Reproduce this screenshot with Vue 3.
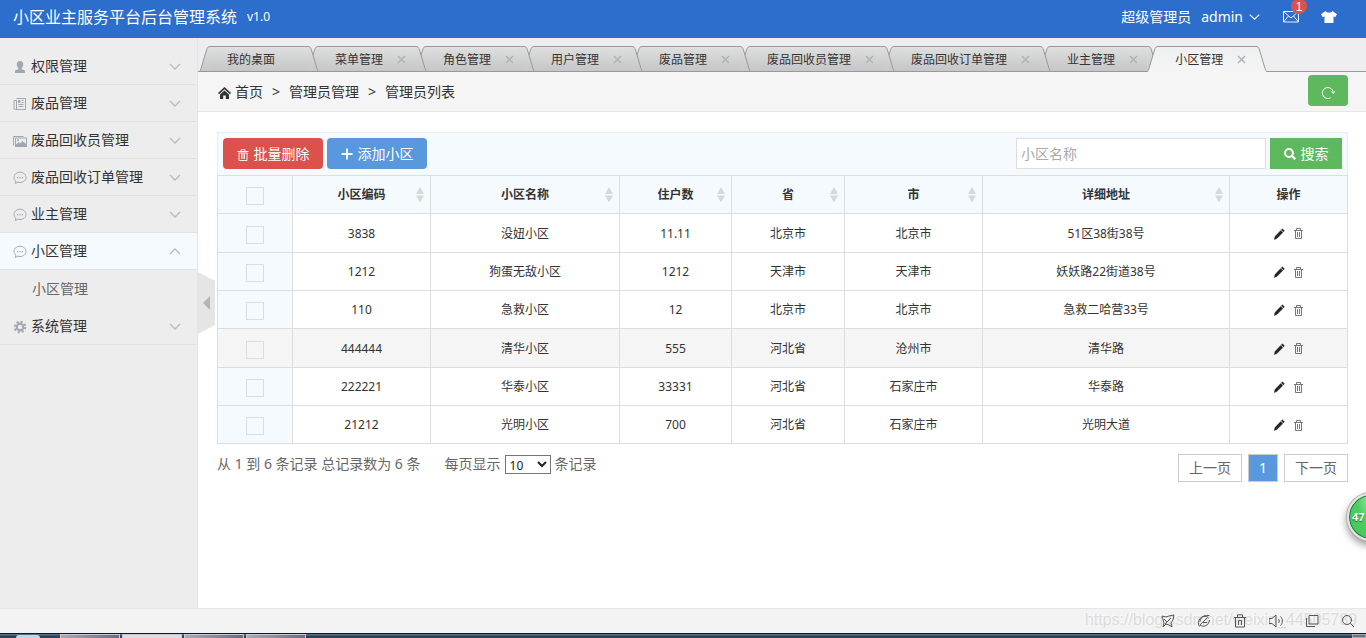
<script setup>
import { ref } from 'vue'

const menus = [
  { name: '权限管理', icon: 'user' },
  { name: '废品管理', icon: 'news' },
  { name: '废品回收员管理', icon: 'image' },
  { name: '废品回收订单管理', icon: 'chat' },
  { name: '业主管理', icon: 'chat' },
  { name: '小区管理', icon: 'chat', open: true, children: ['小区管理'] },
  { name: '系统管理', icon: 'gear' },
]
const tabs = ['我的桌面', '菜单管理', '角色管理', '用户管理', '废品管理', '废品回收员管理', '废品回收订单管理', '业主管理', '小区管理']
const activeTab = tabs.length - 1
const columns = ['小区编码', '小区名称', '住户数', '省', '市', '详细地址']
const rows = [
  ['3838', '没妞小区', '11.11', '北京市', '北京市', '51区38街38号'],
  ['1212', '狗蛋无敌小区', '1212', '天津市', '天津市', '妖妖路22街道38号'],
  ['110', '急救小区', '12', '北京市', '北京市', '急救二哈营33号'],
  ['444444', '清华小区', '555', '河北省', '沧州市', '清华路'],
  ['222221', '华泰小区', '33331', '河北省', '石家庄市', '华泰路'],
  ['21212', '光明小区', '700', '河北省', '石家庄市', '光明大道'],
]
const highlighted = 3
const keyword = ref('')
const pageSize = ref('10')
</script>

<template>
  <div class="page">
    <header class="topbar">
      <h1 class="brand">小区业主服务平台后台管理系统</h1>
      <span class="version">v1.0</span>
      <nav class="account">
        <span>超级管理员</span>
        <a class="who" href="#">admin
          <svg width="11" height="6" viewBox="0 0 11 6"><path d="M.7.6 5.5 5.1 10.3.6" fill="none" stroke="#fff" stroke-width="1.200" /></svg>
        </a>
        <a class="mail" href="#" aria-label="消息">
          <svg width="16" height="12" viewBox="0 0 16 12"><path d="M.5.5h15v10.500H.5zM.5.5 8 7 15.500.5M.5 11l5-6M15.500 11l-5-6" fill="none" stroke="#fff" stroke-width=".9" /></svg>
          <span class="badge">1</span>
        </a>
        <a class="skin" href="#" aria-label="换肤">
          <svg width="16" height="12" viewBox="0 0 16 12"><path d="M4.500 0C6 2 10 2 11.500 0L16 3.200 14.200 6.200 12.500 5.200V12h-9V5.200L1.800 6.200 0 3.200z" fill="#fff" /></svg>
        </a>
      </nav>
    </header>

    <div class="body">
      <aside class="sidebar">
        <nav>
          <template v-for="m in menus" :key="m.name">
            <button class="menu" :class="{ open: m.open }" type="button">
              <svg class="menu-icon" width="14" height="14" viewBox="0 0 14 14">
                <path v-if="m.icon === 'user'" d="M7 1c2.200 0 3.400 1.500 3.200 3.800-.1 1.400-.7 2.600-1.500 3.300v1.200L12 10.400V13H2v-2.600l3.300-1.100V8.100C4.500 7.400 3.900 6.200 3.800 4.800 3.600 2.500 4.800 1 7 1z" fill="#a1a7b2" />
                <g v-else-if="m.icon === 'news'" fill="none" stroke="#a1a7b2">
                  <path d="M3.500 1.500h9v11H2.500a1.500 1.500 0 0 1-1.500-1.500V3.500h2.500V12M5.500 7.500h5M5.500 9.500h5M8.500 3.500h2M8.500 5.500h2" />
                  <path d="M5.500 3.500h1.500v2H5.500z" fill="#a1a7b2" />
                </g>
                <g v-else-if="m.icon === 'image'">
                  <path d="M.5 11.500V2.500h10" fill="none" stroke="#a1a7b2" />
                  <path fill-rule="evenodd" d="M2 3.500h12v9.500H2zM3 4.500v6l2.500-2.500 1.500 1.500 2.500-2.500L13 10V4.500zM5 5.300a1 1 0 1 1 0 2 1 1 0 0 1 0-2z" fill="#a1a7b2" />
                </g>
                <g v-else-if="m.icon === 'chat'">
                  <path d="M3 10.300C1.500 9.300 1 7.900 1 6.500c0-3 2.700-5.300 6-5.300s6 2.300 6 5.300-2.700 5-6 5c-.8 0-1.500-.1-2.200-.3L2.300 12.500z" fill="none" stroke="#a1a7b2" />
                  <path d="M4 6h1.300v1.300H4zM6.400 6h1.300v1.300H6.400zM8.800 6h1.300v1.300H8.800z" fill="#a1a7b2" />
                </g>
                <g v-else fill="none" stroke="#a1a7b2">
                  <circle cx="7" cy="7" r="3.300" stroke-width="2.200" />
                  <circle cx="7" cy="7" r="5.300" stroke-width="2" stroke-dasharray="2.100 2.060" />
                </g>
              </svg>
              <span class="menu-name">{{ m.name }}</span>
              <svg class="arrow" width="12" height="7" viewBox="0 0 12 7"><path :d="m.open ? 'M1 6 6 1 11 6' : 'M1 1 6 6 11 1'" fill="none" stroke="#bbb" stroke-width="1.300" /></svg>
            </button>
            <a v-for="c in m.children" :key="c" class="submenu" href="#">{{ c }}</a>
          </template>
        </nav>
      </aside>

      <main class="main">
        <button class="handle" type="button" aria-label="收起菜单">
          <svg width="18" height="62" viewBox="0 0 18 62"><path d="M0 0 17 9V53L0 62z" fill="#e5e5e5" /><path d="M5 31 12 24V38z" fill="#b5b5b5" /></svg>
        </button>

        <nav class="tabs">
          <a v-for="(t, i) in tabs" :key="t" href="#" class="tab" :class="{ active: i === activeTab }" :style="{ zIndex: i === activeTab ? 20 : 10 - i }">
            <svg class="edge" width="12" height="26" viewBox="0 0 12 26">
              <defs>
                <linearGradient id="tab-idle" x1="0" y1="0" x2="0" y2="1"><stop offset="0" stop-color="#dedfdf" /><stop offset="1" stop-color="#c6c6c8" /></linearGradient>
                <linearGradient id="tab-on" x1="0" y1="0" x2="0" y2="1"><stop offset="0" stop-color="#eeeff0" /><stop offset="1" stop-color="#f5f5f5" /></linearGradient>
              </defs>
              <path d="M0 26C1 25 1.500 24 2 22.500L7.500 4C8.300 1.500 9 .5 11 .5h1V26z" :fill="i === activeTab ? 'url(#tab-on)' : 'url(#tab-idle)'" />
              <path d="M0 26C1 25 1.500 24 2 22.500L7.500 4C8.300 1.500 9 .5 11 .5h1" fill="none" stroke="#999" />
            </svg>
            <span class="tab-mid">{{ t }}<span v-if="i" class="close"><svg width="9" height="9" viewBox="0 0 9 9"><path d="M1 1l7 7M8 1 1 8" stroke="#aeb3b8" stroke-width="1.500" /></svg></span></span>
            <svg class="edge" width="12" height="26" viewBox="0 0 12 26">
              <path d="M12 26C11 25 10.500 24 10 22.500L4.500 4C3.700 1.500 3 .5 1 .5H0V26z" :fill="i === activeTab ? 'url(#tab-on)' : 'url(#tab-idle)'" />
              <path d="M12 26C11 25 10.500 24 10 22.500L4.500 4C3.700 1.500 3 .5 1 .5H0" fill="none" stroke="#999" />
            </svg>
          </a>
        </nav>

        <div class="crumbs">
          <svg class="home" width="13" height="12" viewBox="0 0 13 12"><path d="M6.500 0 13 6 12 7.200 6.500 2.300 1 7.200 0 6z" fill="#333" /><path d="M2 7.500 6.500 3.600 11 7.500V12H7.800V8.500H5.200V12H2z" fill="#333" /></svg>
          <a href="#">首页</a><span class="gt">&gt;</span><a href="#">管理员管理</a><span class="gt">&gt;</span><span>管理员列表</span>
          <button class="refresh" type="button" aria-label="刷新">
            <svg width="14" height="14" viewBox="0 0 14 14"><path d="M9.500 11.800A5.500 5.500 0 1 1 12.300 6.500M10.300 5.500 12.300 7.500 13.800 5.300" fill="none" stroke="#fff" /></svg>
          </button>
        </div>

        <section class="content">
          <div class="toolbar">
            <button class="btn danger" type="button">
              <svg class="bin" width="12" height="12" viewBox="0 0 12 12"><path d="M.5 2.500h11M4 2.500V.7h4v1.800M2 4v7.500h8V4M4.500 4.500V10M6 4.500V10M7.500 4.500V10M1.500 4h9" fill="none" stroke="#fff" stroke-width=".9" /></svg>
              批量删除
            </button>
            <button class="btn primary" type="button">
              <svg width="12" height="12" viewBox="0 0 12 12"><path d="M6 .5v11M.5 6h11" stroke="#fff" stroke-width="1.800" /></svg>
              添加小区
            </button>
            <input v-model="keyword" class="keyword" type="text" placeholder="小区名称" aria-label="小区名称">
            <button class="btn success" type="button">
              <svg width="12" height="12" viewBox="0 0 12 12"><circle cx="5" cy="5" r="3.900" fill="none" stroke="#fff" stroke-width="2" /><path d="M8 8l3.200 3.200" stroke="#fff" stroke-width="2.300" /></svg>
              搜索
            </button>
          </div>

          <table class="grid">
            <colgroup><col class="c-check"><col class="c-code"><col class="c-name"><col class="c-count"><col class="c-prov"><col class="c-city"><col class="c-addr"><col class="c-op"></colgroup>
            <thead>
              <tr>
                <th><input type="checkbox" aria-label="全选"></th>
                <th v-for="c in columns" :key="c">
                  <span class="th-in">{{ c }}<svg class="sort" width="8" height="16" viewBox="0 0 8 16"><path d="M4 0 8 7H0zM4 15.500 0 8.500h8z" fill="#d8d8d8" /></svg></span>
                </th>
                <th>操作</th>
              </tr>
            </thead>
            <tbody>
              <tr v-for="(r, i) in rows" :key="r[0]" :class="{ hot: i === highlighted }">
                <td><input type="checkbox" :aria-label="'选择 ' + r[1]"></td>
                <td v-for="(v, k) in r" :key="k" class="value">{{ v }}</td>
                <td>
                  <span class="ops">
                    <a href="#" aria-label="编辑"><svg width="11" height="12" viewBox="0 0 11 12"><path d="M8.400.8 10.400 2.800 9.400 3.900 7.300 1.800zM6.700 2.500 8.800 4.600 2.900 10.500.3 11.600 1 8.500z" fill="#222" stroke="#222" stroke-width=".4" /></svg></a>
                    <a href="#" aria-label="删除"><svg width="9" height="11" viewBox="0 0 9 11"><path d="M0 2.500h9M2.500 2V.5h4V2M1.500 3v7.500h6V3M3.500 4v5M5.500 4v5" fill="none" stroke="#666" stroke-width=".9" /></svg></a>
                  </span>
                </td>
              </tr>
            </tbody>
          </table>

          <div class="foot">
            <span>从 1 到 6 条记录 总记录数为 6 条</span>
            <label class="size">每页显示
              <select v-model="pageSize"><option>10</option><option>25</option><option>50</option></select>
              条记录</label>
            <nav class="pager">
              <a href="#">上一页</a><a href="#" class="current">1</a><a href="#">下一页</a>
            </nav>
          </div>
        </section>
      </main>
    </div>

    <footer class="status">
      <span class="mark">https://blog.csdn.net/weixin_44505789</span>
      <div class="tools">
        <svg viewBox="0 0 14 14"><path d="M1 2l4 1 3-1 5-1-1 5-2 3 1 4-3-2-3-1-3 3 1-4zM4 10l6-6M3 5l3 3" /></svg>
        <svg viewBox="0 0 14 14"><path d="M2.500 12.500C-1 7 4 .5 12.500 1.500M3 11c3 2.500 9 1 9.500-5M3 7.500C4 2 9 1 11.500 4M6 8.500h4M3 11l7-7" /></svg>
        <svg viewBox="0 0 14 14"><path d="M1 3.500h12M4.500 3V.8h5V3M2.500 4v9h9V4M5.500 11V6.500h3V11" /></svg>
        <svg viewBox="0 0 14 14"><path d="M0 4.500h3L7 1v12L3 9.500H0zM9.500 5c1 1 1 3 0 4M11.500 2.500c2.500 2.500 2.500 6.500 0 9" /></svg>
        <svg viewBox="0 0 14 14"><path d="M4 1.500h9V10H4zM1.500 4v8.500H10" /></svg>
        <svg viewBox="0 0 14 14"><circle cx="6" cy="6" r="4.500" /><path d="M9.300 9.300 13 13" /></svg>
      </div>
    </footer>
    <div class="taskbar">
      <i class="orb"></i><i class="win"></i><i class="win bright"></i><i class="win"></i><i class="win"></i><i class="peek"></i>
    </div>

    <div class="ball">47</div>
  </div>
</template>

<style>
html, body { margin: 0; background: #fff; }
</style>

<style scoped>
.page {
  position: relative;
  display: flex;
  flex-direction: column;
  min-height: 100vh;
  overflow: hidden;
  font: 14px/20px "Noto Sans", "Noto Sans CJK SC", sans-serif;
  color: #333;
}
.page * { box-sizing: border-box; }
a { color: inherit; text-decoration: none; }
button, input, select { font: inherit; color: inherit; margin: 0; }
svg { display: block; flex: none; }

.topbar {
  display: flex;
  align-items: center;
  height: 38px;
  padding: 0 29px 4px 13px;
  background: #2d6dcc;
  color: #fff;
}
.brand { margin: 0; font-size: 16px; font-weight: 400; }
.version { margin-left: 10px; font-size: 12px; }
.account { display: flex; align-items: center; margin-left: auto; gap: 10px; }
.who { display: flex; align-items: center; gap: 6px; }
.mail { position: relative; margin-left: 13px; }
.badge {
  position: absolute;
  left: 8px;
  top: -11px;
  width: 16px;
  height: 14px;
  border-radius: 5px 5px 8px 8px;
  background: #dd514c;
  font: 12px/14px "Liberation Sans", Arial, sans-serif;
  text-align: center;
}
.skin { margin-left: 12px; }

.body { flex: 1; display: flex; }
.sidebar {
  flex: none;
  width: 198px;
  padding-top: 10px;
  background: #ededed;
  border-right: 1px solid #e5e5e5;
}
.menu {
  display: flex;
  align-items: center;
  width: 100%;
  height: 37px;
  padding: 0 16px 0 13px;
  border: 0;
  border-bottom: 1px solid #e2e2e2;
  background: none;
  text-align: left;
}
.menu.open { background: #f5fafe; }
.menu-icon { margin-top: 2px; }
.menu-name { flex: 1; margin-left: 4px; }
.submenu { display: block; padding: 9px 0 9px 32px; color: #666; }

.main { position: relative; flex: 1; min-width: 0; }
.handle {
  position: absolute;
  left: 0;
  top: 234px;
  padding: 0;
  border: 0;
  background: none;
}
.tabs {
  display: flex;
  height: 34px;
  padding: 8px 0 0 1px;
  background: #eeeef0;
  box-shadow: inset 0 -1px #999;
}
.tab {
  position: relative;
  display: flex;
  height: 25px;
  margin-right: -12px;
  font-size: 12px;
  line-height: 26px;
}
.tab.active { height: 26px; }
.edge { height: 26px; }
.tab:not(.active) .edge { clip-path: inset(0 0 1px 0); }
.tab-mid {
  display: flex;
  padding: 0 32px 0 16px;
  border-top: 1px solid #999;
  background: linear-gradient(#dedfdf, #c6c6c8);
}
.tab.active .tab-mid { background: linear-gradient(#eeeff0, #f5f5f5); }
.close { width: 0; padding: 8px 0 0 14px; margin-right: -14px; }

.crumbs {
  display: flex;
  align-items: center;
  height: 40px;
  padding: 0 18px 0 20px;
  background: #f5f5f5;
  border-bottom: 1px solid #e5e5e5;
}
.home { margin: 2px 4px 0 0; }
.gt { margin: 0 9px; }
.refresh {
  display: grid;
  place-items: center;
  width: 40px;
  height: 31px;
  margin: 0 0 2px auto;
  padding: 4px 0 0;
  border: 0;
  border-radius: 4px;
  background: #5eb95e;
}

.content { padding: 20px 18px 20px 19px; }
.toolbar {
  display: flex;
  gap: 4px;
  height: 43px;
  padding: 5px;
  border: 1px solid #ebeef0;
  border-bottom: 0;
  background: #f5fafe;
}
.btn {
  display: flex;
  align-items: center;
  justify-content: center;
  gap: 5px;
  width: 100px;
  height: 31px;
  padding: 0;
  border: 0;
  border-radius: 4px;
  color: #fff;
}
.bin { margin-top: 2px; }
.danger { background: #dd514c; }
.primary { background: #5a98de; }
.success { width: 72px; border-radius: 0; background: #5eb95e; }
.keyword {
  width: 250px;
  height: 31px;
  margin-left: auto;
  padding: 4px;
  border: 1px solid #ddd;
  background: #fff;
  outline: 0;
}
.keyword::placeholder { color: #aaa; opacity: 1; }

.grid {
  width: 100%;
  table-layout: fixed;
  border-collapse: collapse;
  font-size: 12px;
  text-align: center;
}
.c-check { width: 75px; }
.c-code, .c-city { width: 138px; }
.c-name { width: 189px; }
.c-count { width: 112px; }
.c-prov { width: 113px; }
.c-addr { width: 247px; }
.c-op { width: 118px; }
.grid th, .grid td { height: 38px; padding: 0; border: 1px solid #ddd; }
.grid .value { padding-top: 1px; }
.grid tbody tr:nth-child(3n+1) td { height: 39px; }
.grid th, .grid td:first-child { background: #f5fafe; }
.grid .hot td, .grid .hot td:first-child { background: #f5f5f5; }
.grid input {
  display: block;
  appearance: none;
  width: 18px;
  height: 18px;
  margin: 3px auto 0;
  border: 1px solid #ddd;
}
.th-in { display: block; position: relative; }
.sort { position: absolute; right: 6px; top: 2px; }
.ops { display: flex; justify-content: center; align-items: center; gap: 9px; padding: 1px 1px 0 0; }

.foot { display: flex; margin-top: 10px; color: #666; }
.size { display: flex; margin-left: 24px; }
.size select {
  width: 46px;
  height: 19px;
  margin: 1px 4px 0;
  padding: 0;
  border: 1px solid #767676;
  background: #fff;
  color: #222;
  font-size: 12px;
  line-height: 16px;
}
.pager { display: flex; gap: 6px; margin-left: auto; }
.pager a { height: 28px; padding: 4px 10px; border: 1px solid #ccc; line-height: 18px; }
.pager .current { background: #5a98de; color: #fff; }

.status {
  position: relative;
  display: flex;
  align-items: center;
  justify-content: flex-end;
  height: 25px;
  padding-right: 11px;
  border-top: 1px solid #e6e6e6;
  background: #f3f3f3;
}
.mark {
  position: absolute;
  right: 9px;
  top: 1px;
  font: 16px/20px "Liberation Sans", Arial, sans-serif;
  color: #dcdcdc;
  text-shadow: -1px -1px #fafafa;
}
.tools { position: relative; display: flex; gap: 22px; }
.tools svg { width: 14px; height: 14px; fill: none; stroke: #555; stroke-width: 1px; }
.taskbar {
  display: flex;
  gap: 2px;
  height: 5px;
  border-top: 1px solid #0b1a22;
  background: linear-gradient(#6b8496, #2c4258 50%);
}
.orb { width: 24px; margin: 1px 18px 0 16px; border-radius: 12px 12px 0 0; background: #b7d9ea; }
.win { width: 60px; border: 1px solid #c9c9d2; border-bottom: 0; background: linear-gradient(90deg, #aaaab4, #6c6c80); }
.bright { background: #dcdce2; }
.peek { width: 14px; margin-left: auto; border: 1px solid #a5adb4; background: #69737c; }

.ball {
  position: absolute;
  right: -29px;
  top: 493px;
  width: 48px;
  height: 48px;
  padding-left: 3px;
  border: 2px solid #e4e4e4;
  border-radius: 50%;
  background: radial-gradient(ellipse at 50% 0, #a5e8ab, #4fce60 45%, #43c457);
  box-shadow: 0 0 0 1px #aaa, inset 0 0 0 1px #16794a, 0 4px 8px rgba(0, 0, 0, .45);
  color: #fff;
  font-size: 11px;
  font-weight: 700;
  line-height: 44px;
  text-shadow: 0 1px 1px #14622a;
}
</style>
